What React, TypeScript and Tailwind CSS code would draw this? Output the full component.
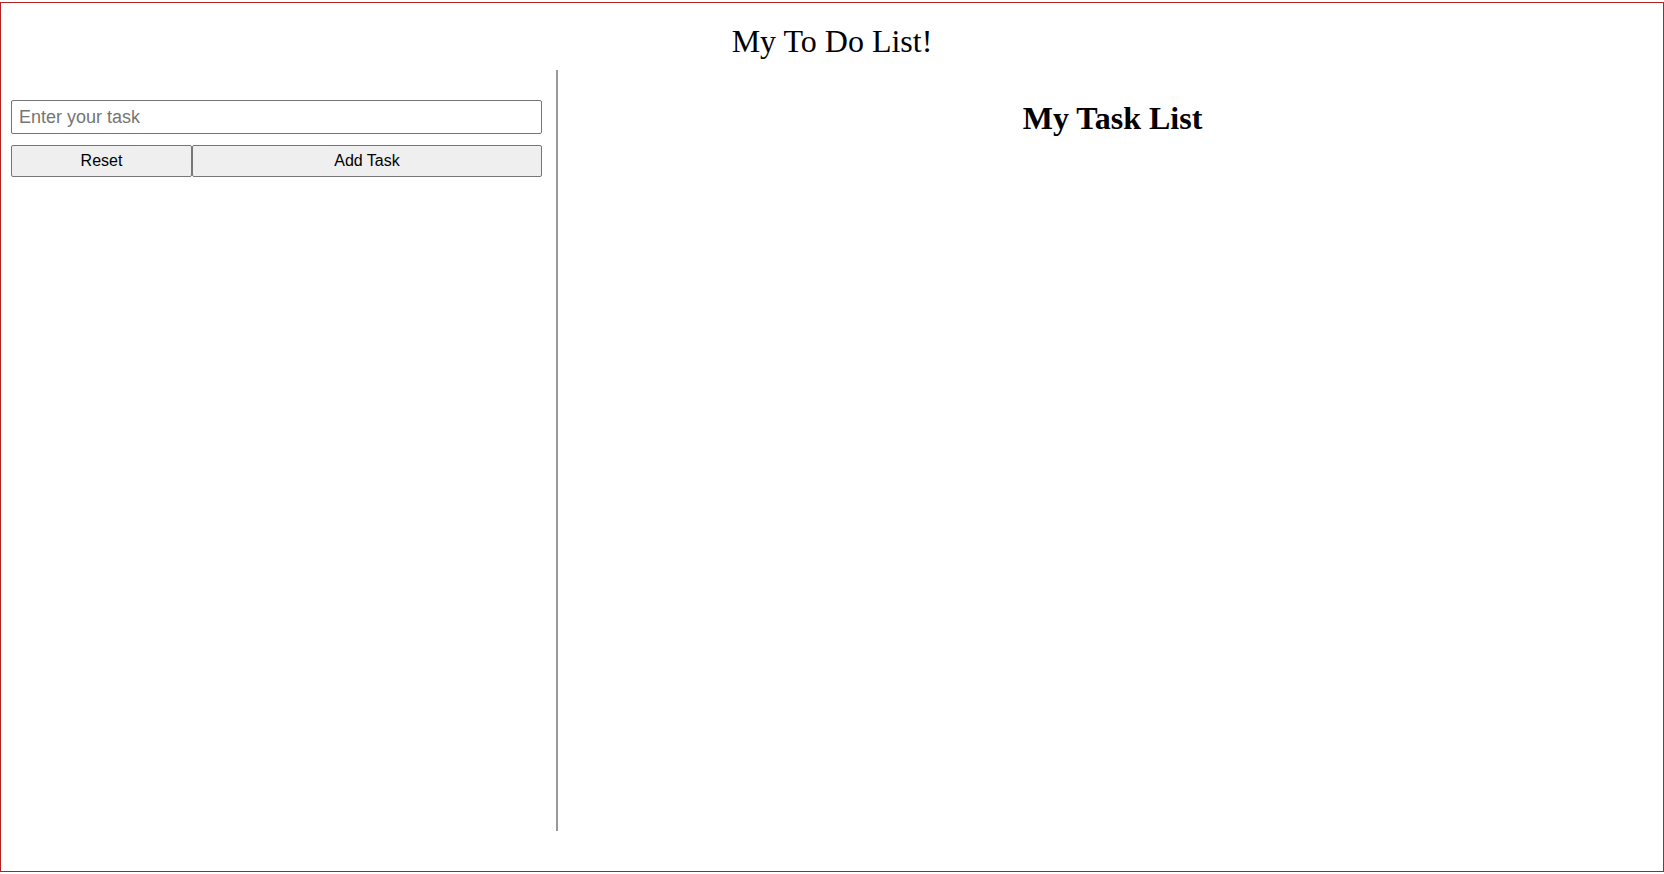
const App = () => {
  return (
    <div className="mt-[2px] h-[870px] w-full border border-[#b22222] bg-white">
      {/* Page title */}
      <h1 className="pt-[20px] text-center font-['Liberation_Serif',serif] text-[32px] font-normal leading-[36px] text-black">
        My To Do List!
      </h1>

      <div className="mt-[11px] flex h-[761px]">
        {/* Entry panel */}
        <div className="w-[557px] shrink-0 border-r-2 border-[#999999] pl-[10px] pt-[30px]">
          <input
            type="text"
            placeholder="Enter your task"
            className="block h-[34px] w-[531px] rounded-[2px] border border-[#767676] px-[7px] font-['Liberation_Sans',Arial,sans-serif] text-[18px] text-black outline-none placeholder:text-[#757575]"
          />
          <div className="mt-[11px] flex">
            <button className="h-[32px] w-[181px] rounded-[2px] border border-[#767676] bg-[#efefef] font-['Liberation_Sans',Arial,sans-serif] text-[16px] text-black">
              Reset
            </button>
            <button className="h-[32px] w-[350px] rounded-[2px] border border-[#767676] bg-[#efefef] font-['Liberation_Sans',Arial,sans-serif] text-[16px] text-black">
              Add Task
            </button>
          </div>
        </div>

        {/* Task list panel */}
        <div className="flex-1 pl-[4px]">
          <h1 className="mt-[30px] text-center font-['Liberation_Serif',serif] text-[32px] font-bold leading-[36px] text-black">
            My Task List
          </h1>
        </div>
      </div>
    </div>
  );
};

export default App;
